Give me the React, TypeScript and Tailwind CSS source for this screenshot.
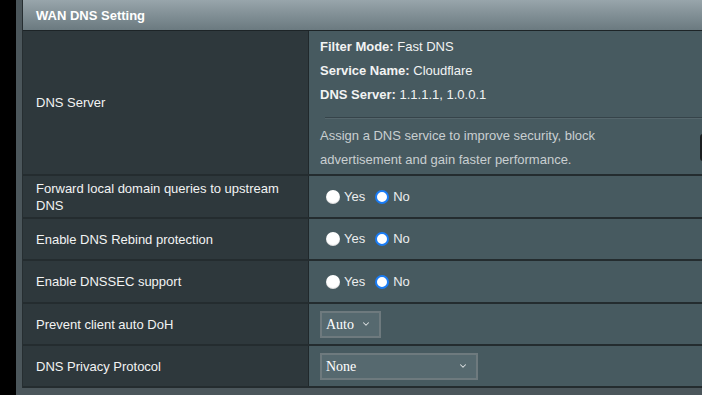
import { ChevronDown } from 'lucide-react';

const Radio = ({ checked }: { checked?: boolean }) => (
  <span
    className={
      checked
        ? 'inline-block h-[14px] w-[14px] rounded-full border-2 border-[#1a7cf5] bg-white'
        : 'inline-block h-[14px] w-[14px] rounded-full bg-white shadow-[inset_0_-1px_1px_rgba(0,0,0,0.15)]'
    }
  />
);

const YesNo = () => (
  <div className="flex items-center pl-[6px] text-[13px] text-[#eceeef]">
    <Radio />
    <span className="ml-[4px]">Yes</span>
    <span className="ml-[10px] flex">
      <Radio checked />
    </span>
    <span className="ml-[4px]">No</span>
  </div>
);

const Select = ({ value, width }: { value: string; width: string }) => (
  <div
    className={`flex h-[27px] items-center justify-between border-2 border-[#6e7a7e] bg-[#56696f] pl-[4px] pr-[8px] font-['Liberation_Serif',serif] text-[14px] text-white ${width}`}
  >
    <span>{value}</span>
    <ChevronDown size={10} strokeWidth={2.5} className="text-[#dfe3e4]" />
  </div>
);

const Row = ({
  label,
  children,
  height,
}: {
  label: React.ReactNode;
  children: React.ReactNode;
  height: string;
}) => (
  <div className={`flex border-b-2 border-[#242c2f] ${height}`}>
    <div className="flex w-[286px] shrink-0 items-center border-r-[1.5px] border-[#20282b] bg-[#2e383c] pl-[13px] pr-[20px] text-[13px] leading-[17px] text-[#f2f3f3]">
      {label}
    </div>
    <div className="flex flex-1 items-center bg-[#475a60] pl-[11px]">{children}</div>
  </div>
);

export default function App() {
  return (
    <div className="relative flex h-[395px] w-[702px] overflow-hidden bg-black font-['Liberation_Sans',Arial,sans-serif]">
      <div className="w-[16px] shrink-0 bg-black" />
      <div className="flex-1 bg-[#4b565b] pl-[6px]">
        <div className="border-l border-[#262e31]">
          <div className="flex h-[31px] items-center border-b-[1.5px] border-[#1d2427] bg-gradient-to-b from-[#98a5ab] to-[#6b7a80] pl-[13px] pt-[1px] text-[13px] font-bold text-white">
            WAN DNS Setting
          </div>

          <div className="flex h-[145px] border-b-2 border-[#242c2f]">
            <div className="flex w-[286px] shrink-0 items-center border-r-[1.5px] border-[#20282b] bg-[#2e383c] pl-[13px] text-[13px] text-[#f2f3f3]">
              DNS Server
            </div>
            <div className="flex-1 bg-[#475a60] pt-[4px] text-[13px] leading-[24px] text-[#f2f3f3]">
              <div className="pl-[11px]">
                <div>
                  <b>Filter Mode:</b> Fast DNS
                </div>
                <div>
                  <b>Service Name:</b> Cloudflare
                </div>
                <div>
                  <b>DNS Server:</b> 1.1.1.1, 1.0.0.1
                </div>
              </div>
              <div className="ml-[16px] mt-[10px] border-t border-[#36444a] border-b border-b-[#55666c]" />
              <div className="mt-[5px] pl-[11px] text-[#c9cfd1]">
                <div>Assign a DNS service to improve security, block</div>
                <div>advertisement and gain faster performance.</div>
              </div>
            </div>
          </div>

          <Row height="h-[43px]" label={<span>Forward local domain queries to upstream DNS</span>}>
            <YesNo />
          </Row>
          <Row height="h-[42px]" label="Enable DNS Rebind protection">
            <YesNo />
          </Row>
          <Row height="h-[43px]" label="Enable DNSSEC support">
            <YesNo />
          </Row>
          <Row height="h-[42px]" label="Prevent client auto DoH">
            <Select value="Auto" width="w-[61px]" />
          </Row>
          <Row height="h-[42px]" label="DNS Privacy Protocol">
            <Select value="None" width="w-[158px]" />
          </Row>
        </div>
      </div>
      <div className="absolute right-[-6px] top-[134px] h-[27px] w-[8px] rounded-[3px] bg-[#1b1f21]" />
    </div>
  );
}
